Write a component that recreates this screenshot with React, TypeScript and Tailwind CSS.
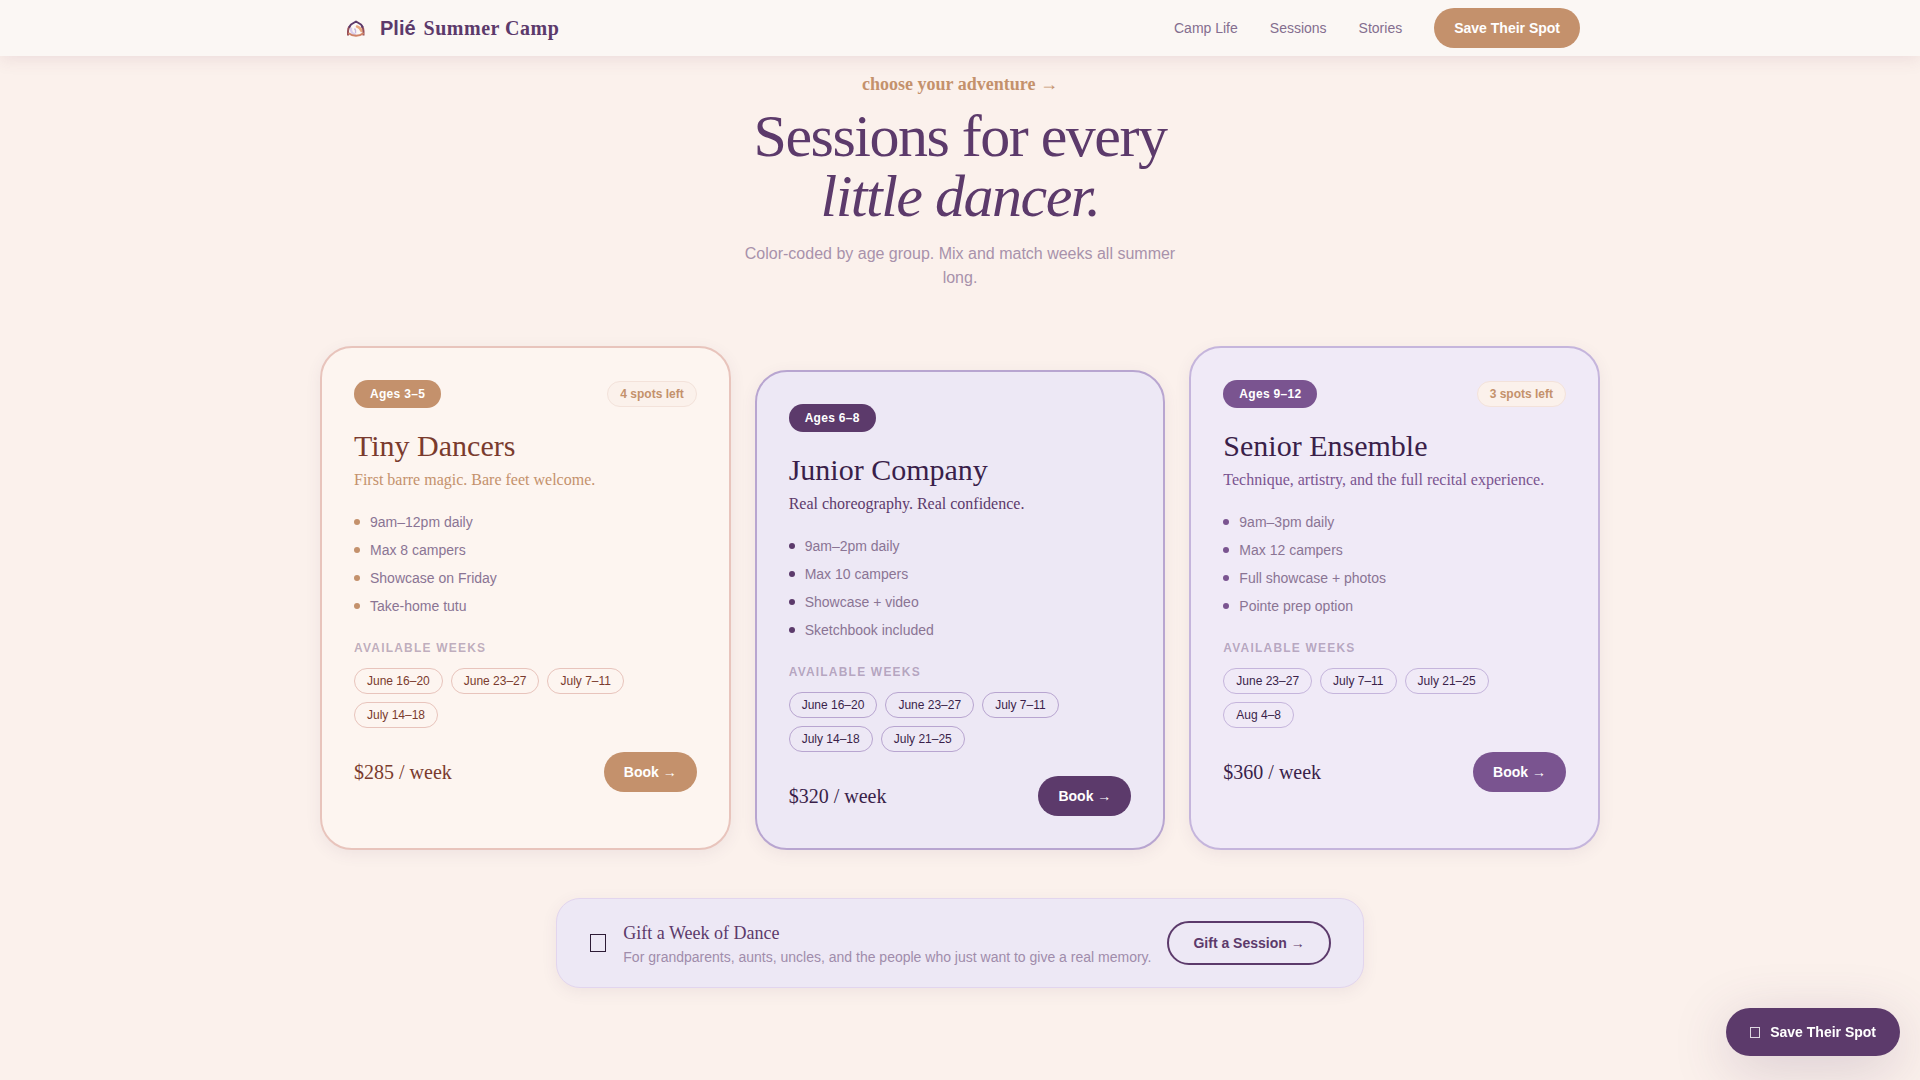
interface Session {
  ages: string;
  spots?: string;
  name: string;
  tagline: string;
  features: string[];
  weeks: string[];
  price: string;
  card: string;
  accent: string;
  title: string;
  sub: string;
  chip: string;
}

const navLinks = ['Camp Life', 'Sessions', 'Stories'];

const sessions: Session[] = [
  {
    ages: 'Ages 3–5',
    spots: '4 spots left',
    name: 'Tiny Dancers',
    tagline: 'First barre magic. Bare feet welcome.',
    features: ['9am–12pm daily', 'Max 8 campers', 'Showcase on Friday', 'Take-home tutu'],
    weeks: ['June 16–20', 'June 23–27', 'July 7–11', 'July 14–18'],
    price: '$285 / week',
    card: 'bg-[#fdf5f0] border-[#e8c4bc]',
    accent: 'bg-[#c4916c]',
    title: 'text-[#7a3b2e]',
    sub: 'text-[#c4916c]',
    chip: 'border-[#e8c4bc]',
  },
  {
    ages: 'Ages 6–8',
    name: 'Junior Company',
    tagline: 'Real choreography. Real confidence.',
    features: ['9am–2pm daily', 'Max 10 campers', 'Showcase + video', 'Sketchbook included'],
    weeks: ['June 16–20', 'June 23–27', 'July 7–11', 'July 14–18', 'July 21–25'],
    price: '$320 / week',
    card: 'bg-[#ede8f5] border-[#b8a5d0] md:mt-6',
    accent: 'bg-[#5c3a6b]',
    title: 'text-[#3a1f4a]',
    sub: 'text-[#5c3a6b]',
    chip: 'border-[#b8a5d0]',
  },
  {
    ages: 'Ages 9–12',
    spots: '3 spots left',
    name: 'Senior Ensemble',
    tagline: 'Technique, artistry, and the full recital experience.',
    features: ['9am–3pm daily', 'Max 12 campers', 'Full showcase + photos', 'Pointe prep option'],
    weeks: ['June 23–27', 'July 7–11', 'July 21–25', 'Aug 4–8'],
    price: '$360 / week',
    card: 'bg-[#f0eaf7] border-[#c5b5dc]',
    accent: 'bg-[#7a5490]',
    title: 'text-[#3a1f4a]',
    sub: 'text-[#7a5490]',
    chip: 'border-[#c5b5dc]',
  },
];

function Logo() {
  return (
    <svg className="w-8 h-8" viewBox="0 0 32 32" fill="none" aria-hidden="true">
      <path d="M11 15.5c-.5 3 1 6.500 5 7.500" stroke="#d9cdec" strokeWidth="2.500" />
      <path d="M14.500 16.500c1.500 1.500 1.500 3 1 4.500" stroke="#c5b5dc" strokeWidth="1.500" />
      <path d="M17 14.500c2 .5 3.500 2 4.500 4.500" stroke="#e9a87e" strokeWidth="2.500" strokeLinecap="round" />
      <path
        d="M8 23.500v-4.500c0-2 .5-3.500 2-5M23.500 23.500v-4.500c0-2-.5-3.500-2-5"
        stroke="#96505a"
        strokeWidth="2"
      />
      <path d="M9 21.500c3.500 3 10.500 3 14 0" stroke="#cf8367" strokeWidth="2" strokeLinecap="round" />
      <path d="M9 15.500l2-3 5-3 5 3 2 3" stroke="#5c3a6b" strokeWidth="2" strokeLinejoin="round" />
    </svg>
  );
}

function BoxIcon({ className }: { className: string }) {
  return <span aria-hidden="true" className={`block shrink-0 border border-current ${className}`} />;
}

function SessionCard({ session }: { session: Session }) {
  return (
    <article
      className={`rounded-[32px] border-2 p-8 shadow-[0_4px_16px_rgba(92,58,107,0.08)] ${session.card}`}
    >
      <div className="flex items-center justify-between mb-5">
        <span
          className={`rounded-full px-4 py-1.5 text-xs font-bold tracking-wide text-white ${session.accent}`}
        >
          {session.ages}
        </span>
        {session.spots && (
          <span className="rounded-full border border-[#f3e2da] bg-[#fbf1eb] px-3 py-1 text-xs font-bold text-[#c4916c]">
            {session.spots}
          </span>
        )}
      </div>

      <h3 className={`font-['Liberation_Serif',serif] text-3xl mb-1 ${session.title}`}>{session.name}</h3>
      <p className={`font-['Liberation_Serif',serif] text-base mb-5 ${session.sub}`}>{session.tagline}</p>

      <ul className="space-y-2 mb-6">
        {session.features.map(feature => (
          <li key={feature} className="flex items-center gap-2.5 text-sm text-[#8a7494]">
            <span className={`w-1.5 h-1.5 rounded-full ${session.accent}`} />
            {feature}
          </li>
        ))}
      </ul>

      <p className="text-xs font-bold uppercase tracking-widest text-[#5c3a6b]/40 mb-3">Available weeks</p>
      <div className="flex flex-wrap gap-2 mb-6">
        {session.weeks.map(week => (
          <span
            key={week}
            className={`rounded-full border px-3 py-1 text-xs ${session.chip} ${session.title}`}
          >
            {week}
          </span>
        ))}
      </div>

      <div className="flex items-center justify-between">
        <span className={`font-['Liberation_Serif',serif] text-xl ${session.title}`}>{session.price}</span>
        <button
          type="button"
          className={`rounded-full px-5 py-2.5 text-sm font-bold text-white ${session.accent}`}
        >
          Book →
        </button>
      </div>
    </article>
  );
}

export default function App() {
  return (
    <div className="min-h-screen bg-[#fbf1ec] font-['Liberation_Sans',Arial,sans-serif]">
      {/* Nav */}
      <header className="sticky top-0 z-10 bg-[#fbf7f4] shadow-[0_4px_16px_rgba(122,59,90,0.1)]">
        <div className="max-w-7xl mx-auto px-5 h-14 flex items-center justify-between">
          <a href="#top" className="flex items-center gap-2 text-xl font-bold text-[#5c3a6b]">
            <Logo />
            <span>Plié</span>
            <span className="font-['Liberation_Serif',serif] tracking-wide">Summer Camp</span>
          </a>
          <nav className="flex items-center gap-8">
            {navLinks.map(link => (
              <a key={link} href="#sessions" className="text-sm text-[#846e8f]">
                {link}
              </a>
            ))}
            <button type="button" className="rounded-full bg-[#c4916c] px-5 py-2.5 text-sm font-bold text-white">
              Save Their Spot
            </button>
          </nav>
        </div>
      </header>

      <main id="sessions" className="max-w-7xl mx-auto pt-3.5 pb-16">
        {/* Heading */}
        <div className="text-center mb-14">
          <p className="font-['Liberation_Serif',serif] text-lg font-bold text-[#c4916c] mb-2">
            choose your adventure →
          </p>
          <h2 className="font-['Liberation_Serif',serif] text-6xl tracking-tight text-[#5c3a6b] mb-4">
            Sessions for every
            <br />
            <em>little dancer.</em>
          </h2>
          <p className="max-w-md mx-auto text-base text-[#a892ab]">
            Color-coded by age group. Mix and match weeks all summer long.
          </p>
        </div>

        {/* Session cards */}
        <div className="grid grid-cols-1 md:grid-cols-3 gap-6">
          {sessions.map(session => (
            <SessionCard key={session.name} session={session} />
          ))}
        </div>

        {/* Gift banner */}
        <div className="mt-12 flex justify-center">
          <div className="flex items-center gap-4 rounded-3xl border border-[#e2d5ee] bg-[#ede8f5] px-8 py-5 shadow-[0_4px_16px_rgba(92,58,107,0.08)]">
            <BoxIcon className="mx-px w-4 h-[18px] text-[#2d1b36]" />
            <div>
              <p className="font-['Liberation_Serif',serif] text-lg text-[#5c3a6b]">Gift a Week of Dance</p>
              <p className="text-sm text-[#a08cab]">
                For grandparents, aunts, uncles, and the people who just want to give a real memory.
              </p>
            </div>
            <button
              type="button"
              className="rounded-full border-2 border-[#5c3a6b] px-6 py-2.5 text-sm font-bold text-[#5c3a6b]"
            >
              Gift a Session →
            </button>
          </div>
        </div>
      </main>

      {/* Floating call to action */}
      <button
        type="button"
        className="fixed bottom-6 right-5 z-10 flex items-center gap-2.5 rounded-full bg-[#5c3a6b] px-6 py-3.5 text-sm font-bold text-white shadow-[0_12px_56px_rgba(92,58,107,0.22)]"
      >
        <BoxIcon className="w-2.5 h-[11px] text-white/80" />
        Save Their Spot
      </button>
    </div>
  );
}
